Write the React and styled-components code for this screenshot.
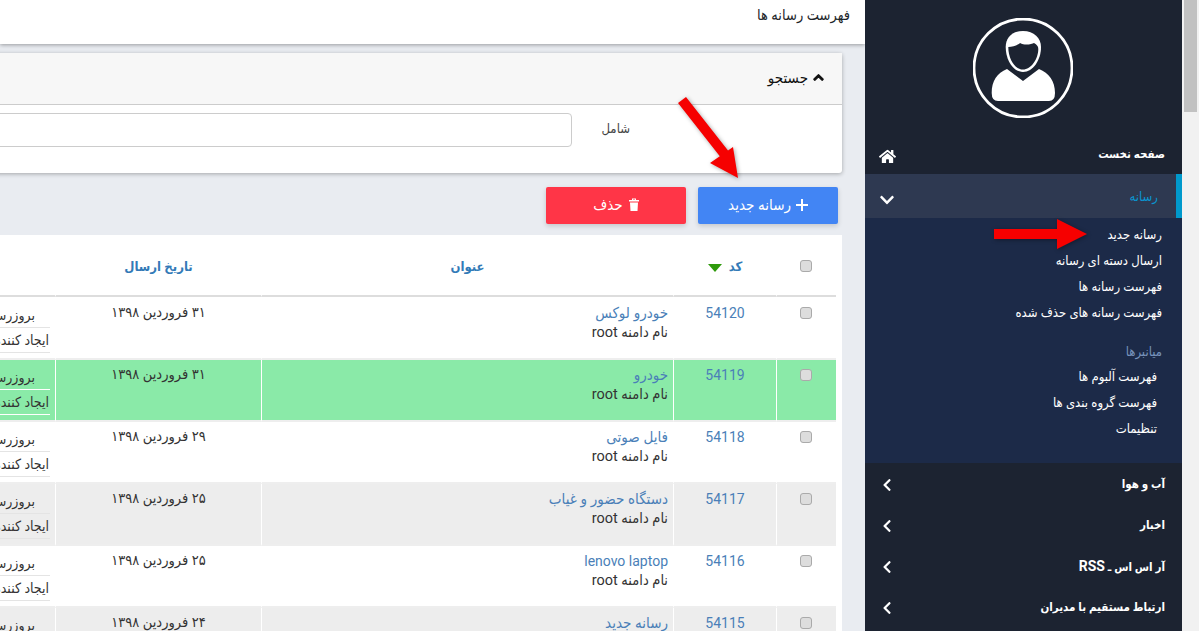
import React from "react";
import styled, { createGlobalStyle } from "styled-components";
import { FaChevronDown, FaChevronLeft, FaChevronUp, FaHome } from "react-icons/fa";

const rows = [
  { code: "54120", title: "خودرو لوکس", date: "۳۱ فروردین ۱۳۹۸" },
  { code: "54119", title: "خودرو", date: "۳۱ فروردین ۱۳۹۸", tone: "green" },
  { code: "54118", title: "فایل صوتی", date: "۲۹ فروردین ۱۳۹۸" },
  { code: "54117", title: "دستگاه حضور و غیاب", date: "۲۵ فروردین ۱۳۹۸", tone: "gray" },
  { code: "54116", title: "lenovo laptop", date: "۲۵ فروردین ۱۳۹۸", latin: true },
  { code: "54115", title: "رسانه جدید", date: "۲۴ فروردین ۱۳۹۸", tone: "gray" },
];

const subLinks = ["رسانه جدید", "ارسال دسته ای رسانه", "فهرست رسانه ها", "فهرست رسانه های حذف شده"];
const shortcutLinks = ["فهرست آلبوم ها", "فهرست گروه بندی ها", "تنظیمات"];

const App = () => {
  return (
    <>
      <GlobalStyle />
      <Page>
        <Sidebar>
          <Profile>
            <svg width="100" height="100" viewBox="0 0 100 100">
              <circle cx="50" cy="50" r="49" fill="none" stroke="#fff" strokeWidth="2.8" />
              <path
                fill="#fff"
                d="M50 13C39 13 32.700 20 32.700 29C32.700 42 40 54 50 54C60 54 68 42 68 29C68 20 61 13 50 13Z"
              />
              <path
                fill="#1c2331"
                d="M35.300 29C40 29 45 27 47 25C52 28 59 26 61 25C64 27 65.300 28 65.300 31C65.300 41 58 51.600 50 51.600C42 51.600 35.300 41 35.300 29Z"
              />
              <path
                fill="#fff"
                d="M34 51L50 63L66 51C76 55 82 63 82 75Q82 83 76 83H25Q18.700 83 18.700 75C18.700 63 24 55 34 51Z"
              />
            </svg>
          </Profile>
          <MenuRow>
            <MenuLabel $low>صفحه نخست</MenuLabel>
            <FaHome size={17} />
          </MenuRow>
          <MenuRow $active>
            <MenuLabel $active>رسانه</MenuLabel>
            <FaChevronDown size={16} />
          </MenuRow>
          <SubMenu>
            {subLinks.map((link) => (
              <SubLink key={link}>{link}</SubLink>
            ))}
            <SubHeading>میانبرها</SubHeading>
            {shortcutLinks.map((link) => (
              <SubLink key={link} $nested>
                {link}
              </SubLink>
            ))}
          </SubMenu>
          <MenuRow $short>
            <MenuLabel>آب و هوا</MenuLabel>
            <FaChevronLeft size={14} />
          </MenuRow>
          <MenuRow $short>
            <MenuLabel>اخبار</MenuLabel>
            <FaChevronLeft size={14} />
          </MenuRow>
          <MenuRow $short>
            <MenuLabel>
              آر اس اس ـ <LatinPart>RSS</LatinPart>
            </MenuLabel>
            <FaChevronLeft size={14} />
          </MenuRow>
          <MenuRow $short>
            <MenuLabel>ارتباط مستقیم با مدیران</MenuLabel>
            <FaChevronLeft size={14} />
          </MenuRow>
        </Sidebar>

        <Main>
          <TopBar>فهرست رسانه ها</TopBar>

          <SearchCard>
            <SearchHeader>
              <FaChevronUp size={11} />
              جستجو
            </SearchHeader>
            <SearchBody>
              <FieldLabel>شامل</FieldLabel>
              <FieldInput />
            </SearchBody>
          </SearchCard>

          <Actions>
            <ActionButton $color="#4285f4">
              <svg width="12" height="12" viewBox="0 0 12 12">
                <path d="M6 0V12M0 6H12" stroke="#fff" strokeWidth="2" fill="none" />
              </svg>
              رسانه جدید
            </ActionButton>
            <ActionButton $color="#ff3547" $gap="6px">
              <svg width="10" height="13" viewBox="0 0 10 13">
                <path fill="#fff" d="M0 2H3V.5H7V2H10V3.500H0ZM4 2H6V1.500H4ZM1 4.500H9L8.500 13H1.500Z" fillRule="evenodd" />
              </svg>
              حذف
            </ActionButton>
          </Actions>

          <TableCard>
            <Table>
              <colgroup>
                <col width="60" />
                <col width="103" />
                <col width="412" />
                <col width="206" />
                <col width="219" />
              </colgroup>
              <thead>
                <tr>
                  <HeadCell>
                    <Check $head />
                  </HeadCell>
                  <HeadCell>
                    <SortLabel>
                      کد
                      <SortArrow />
                    </SortLabel>
                  </HeadCell>
                  <HeadCell>عنوان</HeadCell>
                  <HeadCell>تاریخ ارسال</HeadCell>
                  <HeadCell />
                </tr>
              </thead>
              <tbody>
                {rows.map((row) => (
                  <tr key={row.code}>
                    <Cell $tone={row.tone} $center>
                      <Check />
                    </Cell>
                    <Cell $tone={row.tone} $center>
                      <TitleLink $latin>{row.code}</TitleLink>
                    </Cell>
                    <Cell $tone={row.tone}>
                      <TitleLink $latin={row.latin}>{row.title}</TitleLink>
                      <Domain>نام دامنه root</Domain>
                    </Cell>
                    <Cell $tone={row.tone} $center>
                      <DateText>{row.date}</DateText>
                    </Cell>
                    <Cell $tone={row.tone}>
                      <InfoLine $tone={row.tone} $indent>
                        بروزرسانی کننده : root
                      </InfoLine>
                      <InfoLine $tone={row.tone}>ایجاد کننده : root</InfoLine>
                    </Cell>
                  </tr>
                ))}
              </tbody>
            </Table>
          </TableCard>
        </Main>

        <Scrollbar>
          <ScrollThumb />
        </Scrollbar>

        <Annotations viewBox="0 0 1199 631">
          <polygon points="678,103 686,97 728,150.500 733,147 738,178 710,163 719.800,156.200" />
          <polygon points="994,229 1057,229 1057,219 1087,234 1057,249 1057,239 994,239" />
        </Annotations>
      </Page>
    </>
  );
};

const GlobalStyle = createGlobalStyle`
  html, body {
    margin: 0;
    padding: 0;
    overflow: hidden;
    background: #e9ecf1;
  }

  * {
    box-sizing: border-box;
  }
`;

const Page = styled.div`
  position: relative;
  display: flex;
  direction: rtl;
  width: 1199px;
  height: 631px;
  overflow: hidden;
  font-family: Roboto, "DejaVu Sans Condensed", "DejaVu Sans", sans-serif;
  font-size: 13px;
  color: #212529;
`;

const Scrollbar = styled.div`
  flex: 0 0 17px;
  order: -1;
  padding: 0 2px;
  background: #f1f1f1;
`;

const ScrollThumb = styled.div`
  height: 112px;
  background: #c1c1c1;
`;

const Sidebar = styled.aside`
  flex: 0 0 317px;
  background: #1c2331;
  color: #fff;
`;

const Profile = styled.div`
  display: flex;
  justify-content: center;
  height: 130px;
  padding: 18px 1px 0 0;
`;

const MenuRow = styled.div`
  display: flex;
  align-items: center;
  justify-content: space-between;
  height: ${(props) => (props.$short ? "41px" : "44px")};
  padding: 0 ${(props) => (props.$active ? "18px" : "17px")} 0 ${(props) => (props.$short ? "15px" : "14px")};
  background: ${(props) => (props.$active ? "#2e3951" : "transparent")};
  border-right: ${(props) => (props.$active ? "6px solid #0099cc" : "none")};

  svg {
    margin-top: ${(props) => (props.$short ? "2px" : "8px")};
  }
`;

const MenuLabel = styled.span`
  padding-top: ${(props) => (props.$low ? "3px" : "0")};
  font-size: ${(props) => (props.$active ? "13px" : "11.5px")};
  font-weight: ${(props) => (props.$active ? 400 : 700)};
  color: ${(props) => (props.$active ? "#0a95d0" : "#fff")};
`;

const LatinPart = styled.span`
  font-size: 14px;
`;

const SubMenu = styled.div`
  height: 245px;
  padding: 4px 20px 0 0;
  background: #1c2a48;
`;

const SubLink = styled.div`
  height: 26px;
  padding-right: ${(props) => (props.$nested ? "5px" : "0")};
  font-size: 13px;
  line-height: 26px;
  color: #fff;
`;

const SubHeading = styled.div`
  height: 24px;
  margin-top: 14px;
  font-size: 13px;
  line-height: 24px;
  color: #7793bb;
`;

const Main = styled.main`
  flex: 1;
  min-width: 0;
  overflow: hidden;
`;

const TopBar = styled.header`
  height: 44px;
  padding-right: 15px;
  background: #fff;
  box-shadow: 0 1px 4px rgba(0, 0, 0, 0.35);
  font-size: 14.5px;
  line-height: 31px;
  color: #212529;
`;

const SearchCard = styled.section`
  width: 1100px;
  margin: 9px 23px 0 0;
  background: #fff;
  border-radius: 3px;
  box-shadow: 0 1px 4px rgba(0, 0, 0, 0.3);
`;

const SearchHeader = styled.div`
  display: flex;
  align-items: center;
  gap: 5px;
  height: 52px;
  padding: 0 18px 2px 0;
  background: #f7f7f7;
  border-bottom: 1px solid #ccc;
  font-size: 15px;
  color: #111;

  svg {
    stroke: currentColor;
    stroke-width: 50px;
  }
`;

const SearchBody = styled.div`
  display: flex;
  height: 68px;
  padding: 8px 212px 0 0;
`;

const FieldLabel = styled.label`
  flex: 0 0 58px;
  padding-top: 8px;
  font-size: 13px;
  color: #444;
`;

const FieldInput = styled.input`
  flex: 0 0 800px;
  height: 34px;
  background: #fff;
  border: 1px solid #ccc;
  border-radius: 4px;
`;

const Actions = styled.div`
  display: flex;
  gap: 12px;
  margin: 14px 27px 0 0;
`;

const ActionButton = styled.button`
  display: flex;
  align-items: center;
  justify-content: center;
  gap: ${(props) => props.$gap || "5px"};
  width: 140px;
  height: 37px;
  padding: 0 0 2px;
  background: ${(props) => props.$color};
  border: none;
  border-radius: 2px;
  box-shadow: 0 2px 5px rgba(0, 0, 0, 0.16);
  font-family: inherit;
  font-size: 15px;
  color: #fff;
`;

const TableCard = styled.section`
  width: 1006px;
  margin: 11px 23px 0 0;
  padding-right: 6px;
  background: #fff;
`;

const Table = styled.table`
  width: 1000px;
  border-collapse: separate;
  border-spacing: 0;
  table-layout: fixed;

  tbody tr:first-child td {
    height: 63px;
    padding-top: 6px;
  }
`;

const HeadCell = styled.th`
  height: 62px;
  padding: 3px 0 0;
  border-left: 1px solid #fff;
  border-bottom: 2px solid #ddd;
  font-size: 13px;
  font-weight: 700;
  text-align: center;
  color: #337ab7;
`;

const SortLabel = styled.span`
  display: inline-flex;
  align-items: center;
  gap: 7px;
`;

const SortArrow = styled.span`
  width: 0;
  height: 0;
  margin-top: 3px;
  border-top: 8px solid #2e9a0b;
  border-left: 7px solid transparent;
  border-right: 7px solid transparent;
`;

const toneColors = { green: "#8aeaa8", gray: "#ededed" };

const Cell = styled.td`
  height: 62px;
  padding: 5px ${(props) => (props.$center ? "0" : "5px")} 0 0;
  border-left: 1px solid #fff;
  border-bottom: 2px solid #eee;
  background: ${(props) => toneColors[props.$tone] || "#fff"};
  text-align: ${(props) => (props.$center ? "center" : "right")};
  vertical-align: top;
`;

const Check = styled.input.attrs({ type: "checkbox" })`
  appearance: none;
  display: block;
  width: 12px;
  height: 12px;
  margin: ${(props) => (props.$head ? "-2px" : "4px")} 24px 0 auto;
  background: #ddd;
  border: 1px solid #aaa;
  border-radius: 3px;
`;

const TitleLink = styled.div`
  font-size: ${(props) => (props.$latin ? "14px" : "15px")};
  line-height: 20px;
  color: #4a7fb8;
`;

const Domain = styled.div`
  font-size: 14.5px;
  line-height: 20px;
  color: #333;
`;

const DateText = styled.div`
  font-size: 14.5px;
  line-height: 20px;
  color: #333;
`;

const InfoLine = styled.div`
  height: 25px;
  padding-right: ${(props) => (props.$indent ? "15px" : "1px")};
  border-bottom: 1px solid ${(props) => (props.$tone === "green" ? "#fff" : "#e4e4e4")};
  font-size: 14px;
  line-height: 25px;
  color: #333;
  white-space: nowrap;
`;

const Annotations = styled.svg`
  position: absolute;
  top: 0;
  left: 0;
  width: 1199px;
  height: 631px;
  pointer-events: none;
  filter: drop-shadow(1px 1px 2px rgba(0, 0, 0, 0.35));

  polygon {
    fill: #f60000;
  }
`;

export default App;
